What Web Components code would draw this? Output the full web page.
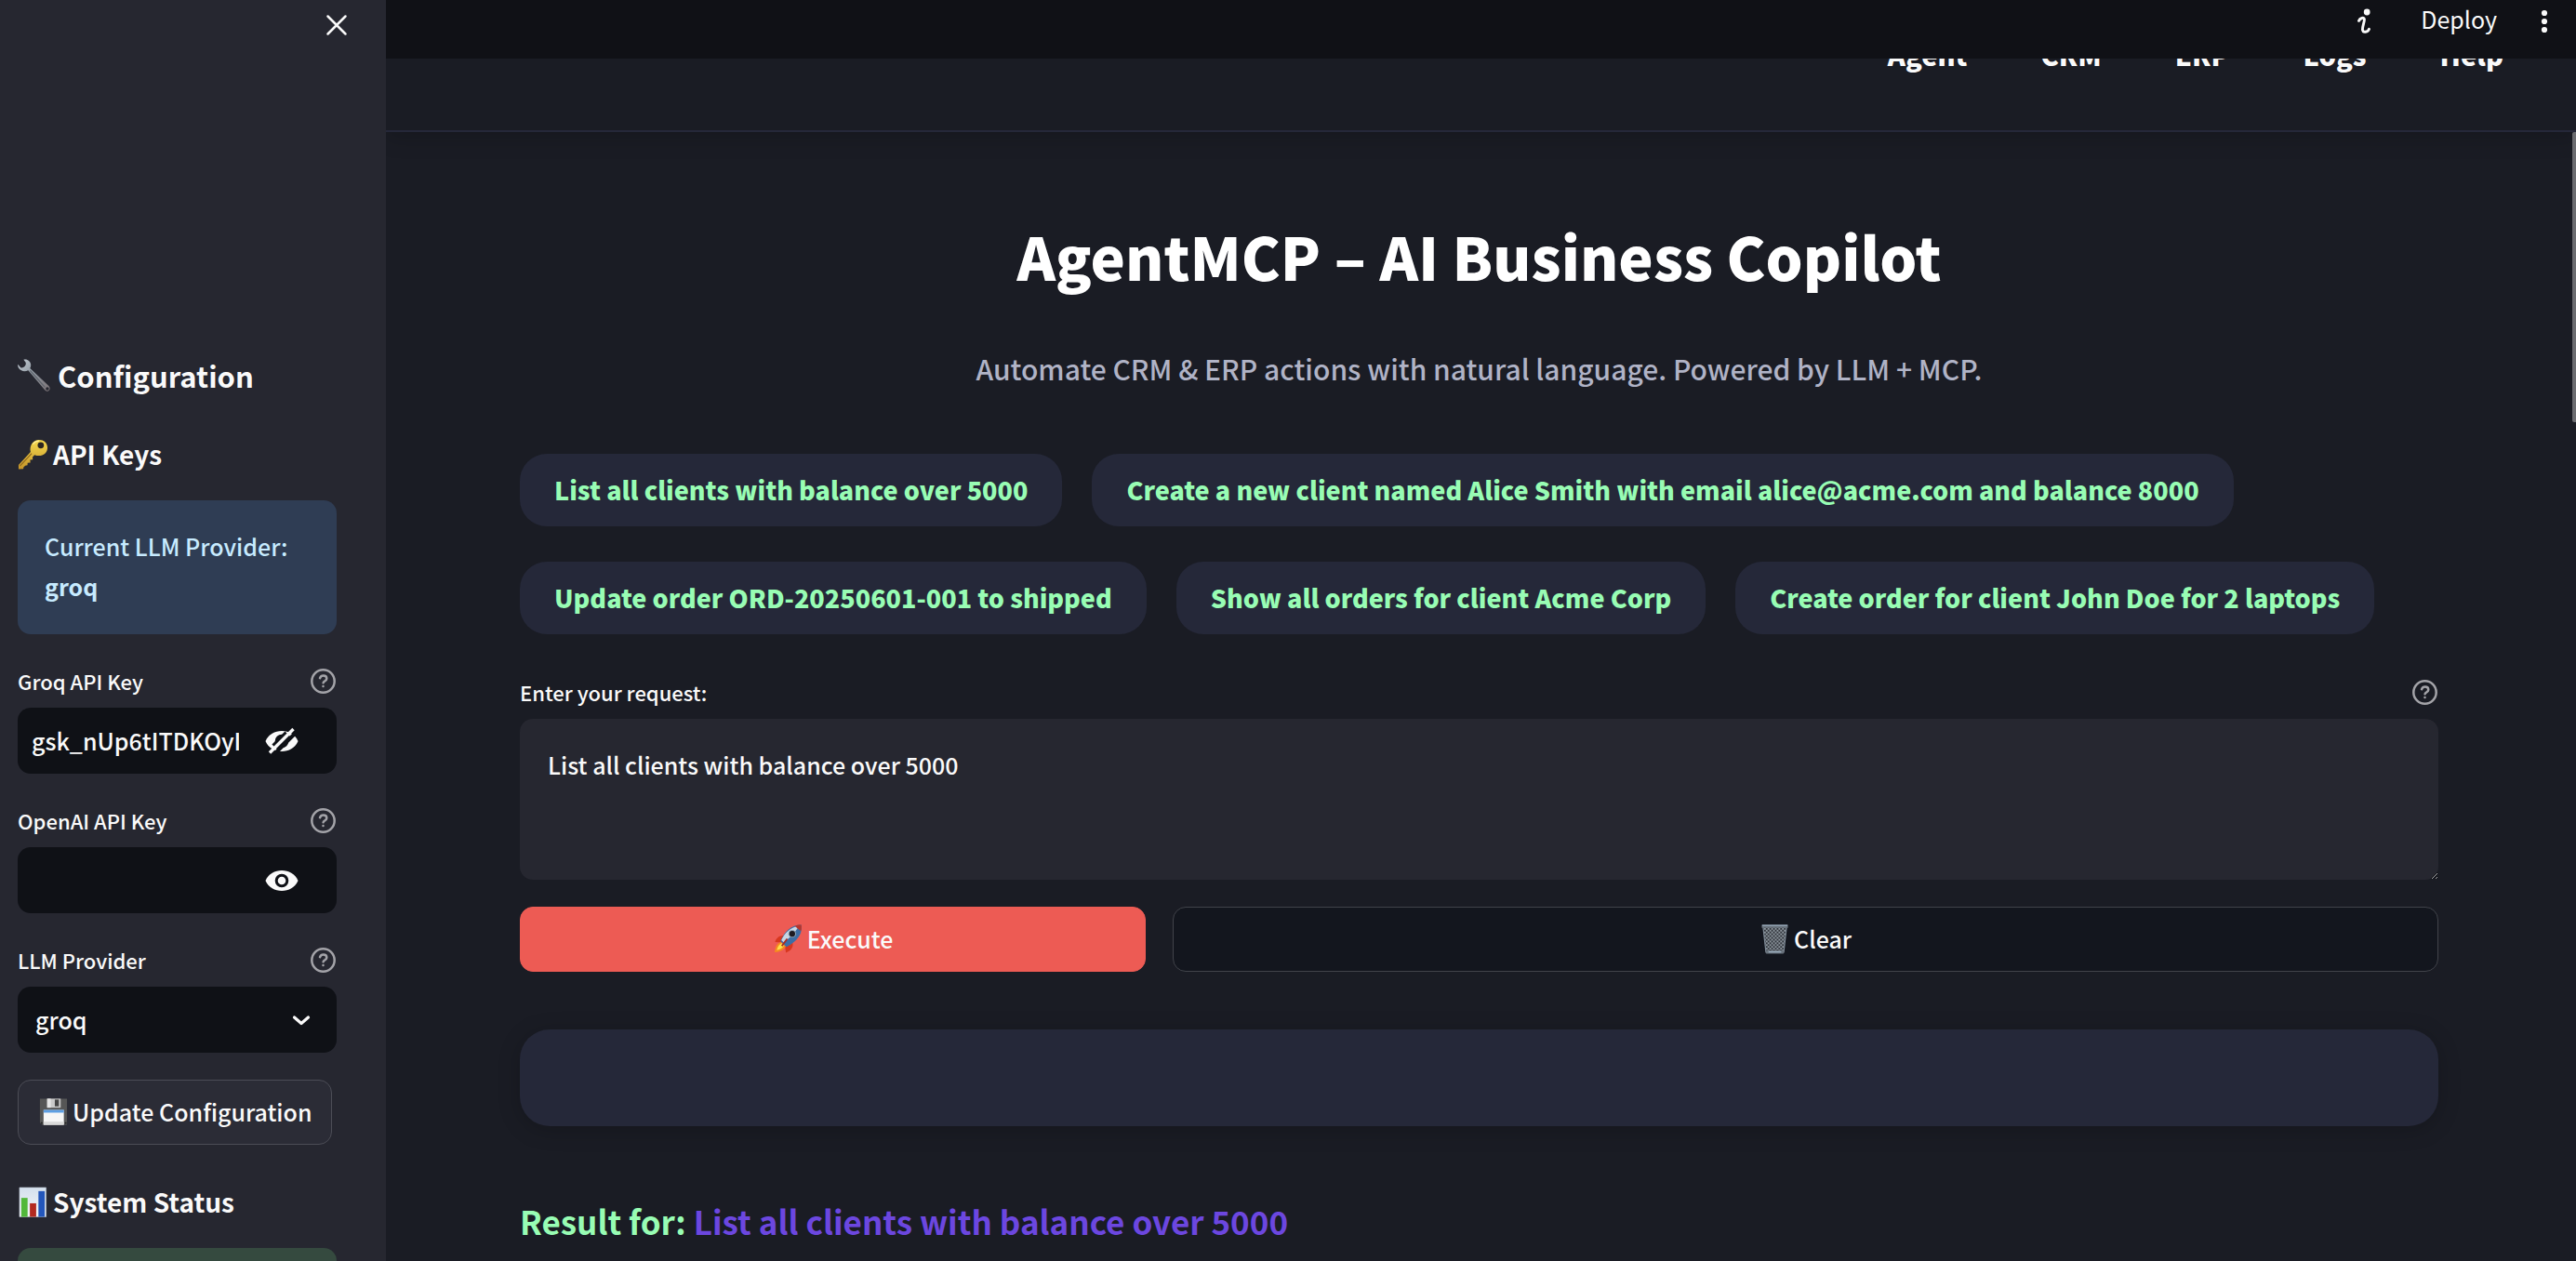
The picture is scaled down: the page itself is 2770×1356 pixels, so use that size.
<!DOCTYPE html>
<html lang="en">
<head>
<meta charset="utf-8">
<title>AgentMCP – AI Business Copilot</title>
<style>
html, body { height: 100%; margin: 0; }
body {
  --bg: #1a1c24; --panel: #262730; --ink: #fafafa; --field: #0f1116; --card: #252839; --green: #98fdb4;
  background: var(--bg); color: var(--ink); overflow: hidden;
  font: 500 25px/43px "Noto Sans CJK SC", "Noto Sans", sans-serif;
}
</style>
</head>
<body>
<copilot-app></copilot-app>
<script>
const define = (name, html, setup) => customElements.define(name, class extends HTMLElement {
  connectedCallback() {
    if (this.shadowRoot) return;
    const t = document.createElement('template');
    t.innerHTML = html;
    this.attachShadow({ mode: 'open' }).append(t.content.cloneNode(true));
    if (setup) setup(this, this.shadowRoot);
  }
});

const ICONS = {
  wrench: `<svg viewBox="0 0 34 34"><defs><linearGradient id="w" x1="0" y1="0" x2="1" y2="1"><stop offset="0" stop-color="#c3ccd4"/><stop offset=".45" stop-color="#8d969f"/><stop offset="1" stop-color="#7d7376"/></linearGradient></defs><path fill="url(#w)" d="M6.200.8C9.500-.4 13.600 2.200 13.800 6.200c0 1.500-.3 2.600-.9 3.500L32.500 28.200c2 2.200 1.200 4.500-.6 5.200-1.500.6-2.700 0-3.600-1L11 11.800c-3.500 1.800-7.600 1-9.600-1.800C.5 8.700 0 7 .3 5.600L2.900 8.700c1.200 1 3.200.4 4.400-.9 1.300-1.300 1.600-3.100.9-4.300z"/><path d="M13 12l15.500 17.500" stroke="#5e636b" stroke-width="1.300"/><circle cx="31" cy="31.200" r="1.700" fill="#262730"/></svg>`,
  key: `<svg viewBox="0 0 34 34"><defs><linearGradient id="k" x1="0" y1="0" x2="0" y2="1"><stop offset="0" stop-color="#f5d94e"/><stop offset="1" stop-color="#c5952a"/></linearGradient></defs><path fill="url(#k)" d="M23.500 1C29 1 33 4.600 33 9.700c0 5.600-4.500 9.200-10.500 8.800-1.700 0-2.800-.2-3.800-.7l-2.200 2.400.2 2.800-2.900.3.3 2.900-3.100.3-.1 2.700-2.500.3-1.900 2-.2 1.800L1 33.500V28.800L14.300 14.500C12.600 7 17.500 1 23.500 1z"/><path d="M2.500 30L15.500 16" stroke="#8f671c" stroke-width="1.200"/><circle cx="25.600" cy="7" r="3.500" fill="#2b2620"/><path d="M17 6c1.500-2.600 4-3.600 6.500-3.500" stroke="#fff0a0" stroke-width="1.200" fill="none"/></svg>`,
  floppy: `<svg viewBox="0 0 34 34"><path fill="#565656" d="M2 2.500h30v29H4.500L2 29z"/><path fill="#c9c9c9" d="M10 2.500h15v10H10z"/><path fill="#e5e5e5" d="M10 2.500h4v10h-4z"/><path fill="#444" d="M18.500 3.500h4.500v7.500h-4.500z"/><path fill="#f6f6f6" d="M6 15h22.500v16.500H6z"/><path fill="#5d9fe3" d="M6 15h22.500v3H6z"/><path fill="#d9d9d9" d="M6 28h22.500v3.500H6z"/><path fill="#222" d="M3 28.500h2V30.500H3zM29.500 28.500h2v2h-2z"/></svg>`,
  chart: `<svg viewBox="0 0 34 34"><defs><linearGradient id="c" x1="0" y1="0" x2="0" y2="1"><stop offset="0" stop-color="#d4e0ed"/><stop offset="1" stop-color="#f4f6f8"/></linearGradient></defs><path fill="url(#c)" stroke="#b5c0cc" stroke-width=".6" d="M2 1h29.500v32.500H2z"/><path fill="#52b83a" d="M4 12.500h7v21H4z"/><path fill="#b32a20" d="M13.500 18.500h7v15h-7z"/><path fill="#2356bb" d="M23 5h7v28.500h-7z"/></svg>`,
  rocket: `<svg viewBox="0 0 34 34"><path fill="#d8371f" d="M13.500 13.500C8 12.500 4 15.500 2.500 20.500L10 21zM22 21.500c1 5.500-2.500 9-7.500 11l-1-8z"/><path fill="#f58a1f" d="M9 20.500C4.500 21.500 2.500 27 2 32c6-.5 10.500-2.500 12.500-7z"/><path fill="#ffe04d" d="M10 22c-3 1-5 4.500-5.500 7.500 3.500-.5 6.500-2.500 8-5z"/><path fill="#3d6ea5" d="M31.500 1.500c1.500 8-2 17-16.500 24.500L8.500 19.500C13 8 22 1 31.500 1.500z"/><path fill="#c8d7e4" d="M29 2.500C20 4 13 10.500 9.500 18.500l3 3C18 16 25 10 29 2.500z"/><path fill="#b8352b" d="M31.500 1.500c.5 2.500.3 4.800-.4 7L24.500 3c2.200-1.100 4.600-1.600 7-1.500z"/><circle cx="21.500" cy="11.500" r="4.300" fill="#8ea3b5"/><circle cx="21.500" cy="11.500" r="3.200" fill="#1d1b22"/><path d="M16 17l-6 8" stroke="#a92c20" stroke-width="2"/></svg>`,
  trash: `<svg viewBox="0 0 34 34"><defs><pattern id="m" width="4" height="4" patternUnits="userSpaceOnUse"><path d="M0 0l4 4M4 0L0 4" stroke="#8e979f" stroke-width="1"/></pattern></defs><path fill="#30343b" d="M4 3.500h26L26.800 33H7.200z"/><path fill="url(#m)" d="M4 3.500h26L26.800 33H7.200z"/><path fill="none" stroke="#7f8b97" stroke-width="1.200" d="M4 4l3.200 28.500M30 4l-3.200 28.500"/><path fill="#68727c" d="M2.500 1.500h29V5h-29zM7 30h20l-.4 3.500H7.400z"/><path fill="#9db0c1" d="M3 1.500h28v1.300H3zM10 31h14v1.300H10z"/></svg>`,
  help: `<svg viewBox="0 0 29 29" fill="none" stroke="#a3a3a8" stroke-width="2.500" stroke-linecap="round" stroke-linejoin="round"><circle cx="14.500" cy="14.500" r="12.200"/><path d="M11 11.200c.7-1.800 2-2.600 3.700-2.600 2 0 3.600 1.300 3.600 3.200 0 2.400-3.500 2.800-3.700 4.500"/><path d="M14.500 20v.1"/></svg>`,
  eye: `<svg viewBox="0 0 36 36"><path fill="#fafafa" d="M.5 18C4 10.500 10.500 7 18 7s14 3.500 17.500 11C32 25.500 25.500 29 18 29S4 25.500.5 18z"/><circle cx="18" cy="18" r="5.800" fill="#fafafa" stroke="#0f1116" stroke-width="3"/></svg>`,
  eyeoff: `<svg viewBox="0 0 36 36"><path fill="#fafafa" d="M.5 18C4 10.500 10.500 7 18 7s14 3.500 17.500 11C32 25.500 25.500 29 18 29S4 25.500.5 18z"/><circle cx="18" cy="18" r="5.800" fill="#fafafa" stroke="#0f1116" stroke-width="3"/><path d="M7 35L34 8" stroke="#0f1116" stroke-width="4"/><path d="M11 25L25 11" stroke="#0f1116" stroke-width="10"/><path d="M5 30.500L30.500 5" stroke="#fafafa" stroke-width="3.400"/></svg>`,
  chevron: `<svg viewBox="0 0 24 24" fill="none" stroke="#fafafa" stroke-width="3.200" stroke-linecap="round" stroke-linejoin="round"><path d="M4.500 9l7.500 6.500L19.500 9"/></svg>`,
  close: `<svg viewBox="0 0 24 24" stroke="#fafafa" stroke-width="2.500" stroke-linecap="round"><path d="M2.500 2.500l19 19M21.500 2.500l-19 19"/></svg>`,
  info: `<svg viewBox="0 0 28 28"><circle cx="17.200" cy="4" r="3.400" fill="#fafafa"/><path d="M8.500 13.300c1.200-2.700 5.600-4.200 5.900-1.700.3 2.700-2.400 8.600-1.900 11.600.6 3.200 5.700 2.600 7-.9" fill="none" stroke="#fafafa" stroke-width="2.900" stroke-linecap="round"/></svg>`,
  dots: `<svg viewBox="0 0 28 28" fill="#fafafa"><circle cx="14" cy="5" r="3.100"/><circle cx="14" cy="14" r="3.100"/><circle cx="14" cy="23" r="3.100"/></svg>`
};

define('ui-icon', `<style>
:host { display: inline-block; flex: none; width: var(--size, 30px); height: var(--size, 30px); }
svg { display: block; width: 100%; height: 100%; }
</style>`, (el, root) => {
  const t = document.createElement('template');
  t.innerHTML = ICONS[el.getAttribute('name')];
  root.append(t.content);
});

define('side-heading', `<style>
:host { display: block; padding: 15px 0 4px; --size: 33px; }
h3 { display: flex; align-items: center; gap: 5px; margin: 0; font-size: 28px; line-height: 34px; font-weight: 700; }
:host([large]) { padding-top: 0; --size: 35px; }
:host([large]) h3 { gap: 8px; font-size: 31px; line-height: 39px; }
</style><h3><slot></slot></h3>`);

define('notice-box', `<style>
:host { display: block; padding: 28px 29px 30px; border-radius: 14px; background: #2f3d54; color: #c7ebff; }
:host([kind="success"]) { min-height: 43px; background: #354a3f; color: #dffde9; }
</style><slot></slot>`);

/* Labelled control: text, secret or drop-down, chosen by the "kind" attribute. */
define('form-field', `<style>
:host { display: block; }
.top { display: flex; align-items: center; justify-content: space-between; height: 42px; margin-bottom: 8px; }
label { font-size: 22px; line-height: 42px; }
.help { display: flex; padding: 0; border: 0; background: none; }
.help ui-icon { --size: 29px; }
.box { display: grid; height: 71px; border-radius: 14px; background: var(--field); overflow: hidden; }
.secret { grid-template-columns: minmax(0, 1fr) 105px; }
input, select, textarea { box-sizing: border-box; min-width: 0; width: 100%; margin: 0; border: 0; outline: 0; background: none; color: inherit; font: inherit; }
input { padding: 0; margin-left: 15px; width: calc(100% - 15px); }
.secret button { display: flex; align-items: center; padding: 0 0 0 28px; border: 0; background: none; }
.secret ui-icon { --size: 36px; }
select { grid-area: 1 / 1; appearance: none; padding: 0 19px; }
.pick ui-icon { grid-area: 1 / 1; --size: 24px; justify-self: end; align-self: center; margin-right: 26px; pointer-events: none; }
textarea { display: block; height: 173px; padding: 28px 30px; border-radius: 14px; background: var(--panel); resize: vertical; }
</style>
<div class="top"><label for="c"></label><button class="help" aria-label="Help"><ui-icon name="help"></ui-icon></button></div>
<div class="body"></div>`, (el, root) => {
  root.querySelector('label').textContent = el.getAttribute('label');
  const kind = el.getAttribute('kind'), value = el.getAttribute('value') || '';
  const body = root.querySelector('.body');
  if (kind === 'area') body.innerHTML = '<textarea id="c"></textarea>';
  else if (kind === 'select') { body.className = 'box pick'; body.innerHTML = `<select id="c"><option>${value}</option><option>openai</option></select><ui-icon name="chevron"></ui-icon>`; }
  else { body.className = 'box secret'; body.innerHTML = `<input id="c" type="${value ? 'text' : 'password'}"><button aria-label="Toggle visibility"><ui-icon name="${value ? 'eyeoff' : 'eye'}"></ui-icon></button>`; }
  root.querySelector('#c').value = value;
});

define('ui-button', `<style>
:host { display: block; --size: 33px; }
button { display: flex; align-items: center; justify-content: center; gap: 4px; box-sizing: border-box; width: 100%; height: 70px; padding: 0 21px 2px; border: 1px solid #4c4d56; border-radius: 14px; background: #2b2c36; color: inherit; font: inherit; white-space: nowrap; }
:host([kind="primary"]) button { background: #ed5b54; border-color: #ed5b54; }
:host([kind="secondary"]) button { background: #13161e; border-color: #41434a; }
</style><button><slot></slot></button>`);

define('prompt-chip', `<style>
:host { display: block; }
button { display: block; height: 78px; padding: 0 37px 2px; border: 0; border-radius: 29px; background: var(--card); color: var(--green); font: inherit; font-size: 27px; font-weight: 900; white-space: nowrap; }
</style><button><slot></slot></button>`);

define('side-bar', `<style>
:host { display: flex; flex-direction: column; box-sizing: border-box; flex: 0 0 415px; min-height: 0; padding: 0 53px 0 19px; background: var(--panel); overflow: hidden; }
header { display: flex; justify-content: flex-end; flex: none; height: 384px; padding-top: 15px; box-sizing: border-box; margin-right: -12px; }
.close { display: flex; align-items: flex-start; height: 24px; padding: 0; border: 0; background: none; }
.close ui-icon { --size: 24px; }
.stack { display: flex; flex-direction: column; gap: 29px; flex: none; }
.fit { align-self: flex-start; }
</style>
<header><button class="close" aria-label="Close sidebar"><ui-icon name="close"></ui-icon></button></header>
<div class="stack">
  <side-heading large><ui-icon name="wrench"></ui-icon>Configuration</side-heading>
  <side-heading><ui-icon name="key"></ui-icon>API Keys</side-heading>
  <notice-box>Current LLM Provider: <strong>groq</strong></notice-box>
  <form-field label="Groq API Key" value="gsk_nUp6tITDKOyI"></form-field>
  <form-field label="OpenAI API Key"></form-field>
  <form-field kind="select" label="LLM Provider" value="groq"></form-field>
  <ui-button class="fit"><ui-icon name="floppy"></ui-icon>Update Configuration</ui-button>
  <side-heading><ui-icon name="chart"></ui-icon>System Status</side-heading>
  <notice-box kind="success"></notice-box>
</div>`);

define('top-bar', `<style>
:host { display: flex; justify-content: flex-end; align-items: flex-start; gap: 19px; box-sizing: border-box; height: 63px; padding-right: 16px; background: #101116; }
button { display: flex; align-items: center; justify-content: center; height: 46px; padding: 0 14px; border: 0; background: none; color: inherit; font: inherit; }
.deploy { height: 41px; font-weight: 400; }
.menu { padding: 0 4px; }
ui-icon { --size: 28px; }
</style>
<button aria-label="Running"><ui-icon name="info"></ui-icon></button>
<button class="deploy">Deploy</button>
<button class="menu" aria-label="Menu"><ui-icon name="dots"></ui-icon></button>`);

define('site-nav', `<style>
:host { display: block; border-bottom: 2px solid var(--card); box-shadow: 0 4px 24px #0003; }
nav { display: flex; justify-content: flex-end; gap: 79px; padding: 36px 78px 60px; }
a { color: var(--ink); font-size: 29px; line-height: 44px; font-weight: 900; text-decoration: none; }
</style>
<nav><a href="#agent">Agent</a><a href="#crm">CRM</a><a href="#erp">ERP</a><a href="#logs">Logs</a><a href="#help">Help</a></nav>`);

define('agent-page', `<style>
:host { display: block; padding: 90px 148px 0 144px; }
h1 { margin: 0 0 52px; font-size: 63px; line-height: 86px; font-weight: 900; color: #fff; text-align: center; }
.lead { margin: 0 0 66px; font-size: 30px; line-height: 52px; color: #b0b3c6; text-align: center; }
.chips { display: flex; flex-wrap: wrap; gap: 38px 32px; margin-bottom: 41px; }
.actions { display: flex; gap: 29px; margin: 29px 0 62px; }
.actions :first-child { flex: 1 1 calc(33.333% - 29px); }
.actions :last-child { flex: 1 1 calc(66.667% - 29px); }
.actions ui-icon { flex: none !important; }
.card { height: 104px; border-radius: 32px; background: var(--card); box-shadow: 0 4px 24px #0003; }
h2 { margin: 76px 0 0; font-size: 35px; line-height: 52px; font-weight: 700; color: var(--green); }
h2 span { color: #6c47e0; }
</style>
<h1>AgentMCP – AI Business Copilot</h1>
<p class="lead">Automate CRM &amp; ERP actions with natural language. Powered by LLM + MCP.</p>
<div class="chips">
  <prompt-chip>List all clients with balance over 5000</prompt-chip>
  <prompt-chip>Create a new client named Alice Smith with email alice@acme.com and balance 8000</prompt-chip>
  <prompt-chip>Update order ORD-20250601-001 to shipped</prompt-chip>
  <prompt-chip>Show all orders for client Acme Corp</prompt-chip>
  <prompt-chip>Create order for client John Doe for 2 laptops</prompt-chip>
</div>
<form-field kind="area" label="Enter your request:" value="List all clients with balance over 5000"></form-field>
<div class="actions">
  <ui-button kind="primary"><ui-icon name="rocket"></ui-icon>Execute</ui-button>
  <ui-button kind="secondary"><ui-icon name="trash"></ui-icon>Clear</ui-button>
</div>
<div class="card"></div>
<h2>Result for: <span>List all clients with balance over 5000</span></h2>`);

define('copilot-app', `<style>
:host { display: flex; height: 100vh; }
main { position: relative; flex: 1; min-width: 0; overflow: hidden; }
top-bar { position: absolute; inset: 0 0 auto; z-index: 2; }
.thumb { position: absolute; right: 0; top: 142px; width: 4px; height: 23%; border-radius: 2px 0 0 2px; background: #6b6c70; }
</style>
<side-bar></side-bar>
<main>
  <top-bar></top-bar>
  <site-nav></site-nav>
  <agent-page></agent-page>
  <div class="thumb"></div>
</main>`);
</script>
</body>
</html>
